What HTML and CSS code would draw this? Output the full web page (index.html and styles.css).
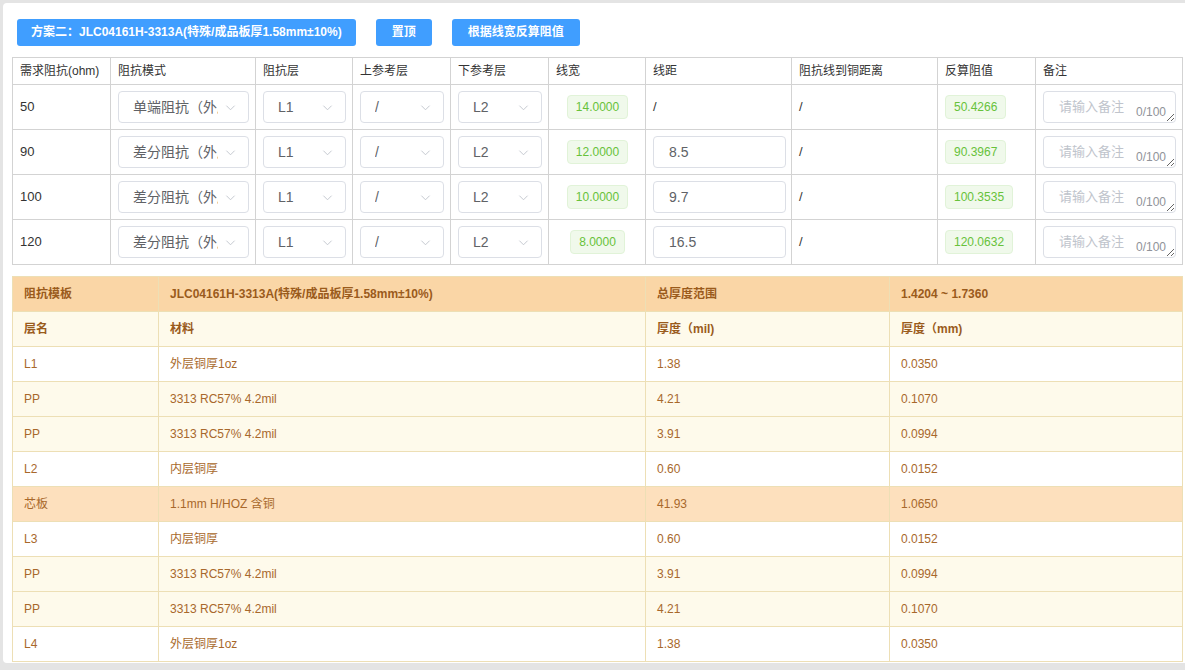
FILE: index.html
```html
<!DOCTYPE html>
<html lang="zh-CN">
<head>
<meta charset="utf-8">
<title>阻抗计算</title>
<link rel="stylesheet" href="styles.css">
</head>
<body>
<div class="card">
  <div class="toolbar">
    <button class="btn btn-wide">方案二：JLC04161H-3313A(特殊/成品板厚1.58mm±10%)</button>
    <button class="btn">置顶</button>
    <button class="btn">根据线宽反算阻值</button>
  </div>

  <table class="imp">
    <colgroup>
      <col class="c98"><col class="c145"><col class="c97"><col class="c98"><col class="c98"><col class="c97"><col class="c146"><col class="c146"><col class="c98"><col class="c147">
    </colgroup>
    <thead>
      <tr>
        <th>需求阻抗(ohm)</th><th>阻抗模式</th><th>阻抗层</th><th>上参考层</th><th>下参考层</th><th>线宽</th><th>线距</th><th>阻抗线到铜距离</th><th>反算阻值</th><th>备注</th>
      </tr>
    </thead>
    <tbody>
      <tr>
        <td>50</td>
        <td><div class="sel"><span class="sel-text">单端阻抗（外层）</span><svg class="arrow" viewBox="0 0 12 12"><path d="M1.5 4 L6 8.5 L10.5 4"/></svg></div></td>
        <td><div class="sel"><span class="sel-text">L1</span><svg class="arrow" viewBox="0 0 12 12"><path d="M1.5 4 L6 8.5 L10.5 4"/></svg></div></td>
        <td><div class="sel"><span class="sel-text">/</span><svg class="arrow" viewBox="0 0 12 12"><path d="M1.5 4 L6 8.5 L10.5 4"/></svg></div></td>
        <td><div class="sel"><span class="sel-text">L2</span><svg class="arrow" viewBox="0 0 12 12"><path d="M1.5 4 L6 8.5 L10.5 4"/></svg></div></td>
        <td class="center"><span class="tag">14.0000</span></td>
        <td>/</td>
        <td>/</td>
        <td><span class="tag">50.4266</span></td>
        <td><div class="ta"><textarea placeholder="请输入备注" rows="1"></textarea><span class="count">0/100</span></div></td>
      </tr>
      <tr>
        <td>90</td>
        <td><div class="sel"><span class="sel-text">差分阻抗（外层）</span><svg class="arrow" viewBox="0 0 12 12"><path d="M1.5 4 L6 8.5 L10.5 4"/></svg></div></td>
        <td><div class="sel"><span class="sel-text">L1</span><svg class="arrow" viewBox="0 0 12 12"><path d="M1.5 4 L6 8.5 L10.5 4"/></svg></div></td>
        <td><div class="sel"><span class="sel-text">/</span><svg class="arrow" viewBox="0 0 12 12"><path d="M1.5 4 L6 8.5 L10.5 4"/></svg></div></td>
        <td><div class="sel"><span class="sel-text">L2</span><svg class="arrow" viewBox="0 0 12 12"><path d="M1.5 4 L6 8.5 L10.5 4"/></svg></div></td>
        <td class="center"><span class="tag">12.0000</span></td>
        <td><div class="inp">8.5</div></td>
        <td>/</td>
        <td><span class="tag">90.3967</span></td>
        <td><div class="ta"><textarea placeholder="请输入备注" rows="1"></textarea><span class="count">0/100</span></div></td>
      </tr>
      <tr>
        <td>100</td>
        <td><div class="sel"><span class="sel-text">差分阻抗（外层）</span><svg class="arrow" viewBox="0 0 12 12"><path d="M1.5 4 L6 8.5 L10.5 4"/></svg></div></td>
        <td><div class="sel"><span class="sel-text">L1</span><svg class="arrow" viewBox="0 0 12 12"><path d="M1.5 4 L6 8.5 L10.5 4"/></svg></div></td>
        <td><div class="sel"><span class="sel-text">/</span><svg class="arrow" viewBox="0 0 12 12"><path d="M1.5 4 L6 8.5 L10.5 4"/></svg></div></td>
        <td><div class="sel"><span class="sel-text">L2</span><svg class="arrow" viewBox="0 0 12 12"><path d="M1.5 4 L6 8.5 L10.5 4"/></svg></div></td>
        <td class="center"><span class="tag">10.0000</span></td>
        <td><div class="inp">9.7</div></td>
        <td>/</td>
        <td><span class="tag">100.3535</span></td>
        <td><div class="ta"><textarea placeholder="请输入备注" rows="1"></textarea><span class="count">0/100</span></div></td>
      </tr>
      <tr>
        <td>120</td>
        <td><div class="sel"><span class="sel-text">差分阻抗（外层）</span><svg class="arrow" viewBox="0 0 12 12"><path d="M1.5 4 L6 8.5 L10.5 4"/></svg></div></td>
        <td><div class="sel"><span class="sel-text">L1</span><svg class="arrow" viewBox="0 0 12 12"><path d="M1.5 4 L6 8.5 L10.5 4"/></svg></div></td>
        <td><div class="sel"><span class="sel-text">/</span><svg class="arrow" viewBox="0 0 12 12"><path d="M1.5 4 L6 8.5 L10.5 4"/></svg></div></td>
        <td><div class="sel"><span class="sel-text">L2</span><svg class="arrow" viewBox="0 0 12 12"><path d="M1.5 4 L6 8.5 L10.5 4"/></svg></div></td>
        <td class="center"><span class="tag">8.0000</span></td>
        <td><div class="inp">16.5</div></td>
        <td>/</td>
        <td><span class="tag">120.0632</span></td>
        <td><div class="ta"><textarea placeholder="请输入备注" rows="1"></textarea><span class="count">0/100</span></div></td>
      </tr>
    </tbody>
  </table>

  <table class="stack">
    <colgroup>
      <col class="c146"><col class="c487"><col class="c244"><col class="c293">
    </colgroup>
    <tr class="r-head"><td>阻抗模板</td><td>JLC04161H-3313A(特殊/成品板厚1.58mm±10%)</td><td>总厚度范围</td><td>1.4204 ~ 1.7360</td></tr>
    <tr class="r-sub"><td>层名</td><td>材料</td><td>厚度（mil)</td><td>厚度（mm)</td></tr>
    <tr class="r-cu"><td>L1</td><td>外层铜厚1oz</td><td>1.38</td><td>0.0350</td></tr>
    <tr class="r-pp"><td>PP</td><td>3313 RC57% 4.2mil</td><td>4.21</td><td>0.1070</td></tr>
    <tr class="r-pp"><td>PP</td><td>3313 RC57% 4.2mil</td><td>3.91</td><td>0.0994</td></tr>
    <tr class="r-cu"><td>L2</td><td>内层铜厚</td><td>0.60</td><td>0.0152</td></tr>
    <tr class="r-core"><td>芯板</td><td>1.1mm H/HOZ 含铜</td><td>41.93</td><td>1.0650</td></tr>
    <tr class="r-cu"><td>L3</td><td>内层铜厚</td><td>0.60</td><td>0.0152</td></tr>
    <tr class="r-pp"><td>PP</td><td>3313 RC57% 4.2mil</td><td>3.91</td><td>0.0994</td></tr>
    <tr class="r-pp"><td>PP</td><td>3313 RC57% 4.2mil</td><td>4.21</td><td>0.1070</td></tr>
    <tr class="r-cu"><td>L4</td><td>外层铜厚1oz</td><td>1.38</td><td>0.0350</td></tr>
  </table>
</div>
</body>
</html>
```

FILE: styles.css
```css
* { box-sizing: border-box; }

html, body {
  margin: 0;
  padding: 0;
  background: #e4e4e4;
  font-family: "Liberation Sans", Arial, "Noto Sans CJK SC", sans-serif;
  overflow: hidden;
}

.card {
  margin: 3px 0 0 3px;
  background: #ffffff;
  border-radius: 4px 0 0 4px;
  padding: 16px 3px 2px 9px;
  width: 1182px;
  height: 660px;
}

.toolbar {
  display: flex;
  gap: 20px;
  padding-left: 5px;
  margin-bottom: 11px;
}

.btn {
  height: 27px;
  padding: 0 16px;
  background: #409eff;
  color: #ffffff;
  border: none;
  border-radius: 3px;
  font-family: inherit;
  font-size: 12px;
  font-weight: bold;
  line-height: 27px;
  white-space: nowrap;
  flex: none;
}
.btn-wide { padding: 0 14px; }

table {
  border-collapse: collapse;
  table-layout: fixed;
  width: 1170px;
}

.c98 { width: 98px; }
.c145 { width: 145px; }
.c97 { width: 97px; }
.c146 { width: 146px; }
.c147 { width: 147px; }
.c487 { width: 487px; }
.c244 { width: 244px; }
.c293 { width: 293px; }

.imp th,
.imp td {
  border: 1px solid #d3d3d3;
  padding: 0 6px 0 7px;
  text-align: left;
  color: #333333;
  white-space: nowrap;
}
.imp th {
  height: 27px;
  font-size: 12px;
  font-weight: normal;
  line-height: 16px;
}
.imp td {
  height: 45px;
  font-size: 13px;
  line-height: 16px;
}
.imp td.center { text-align: center; }

.sel {
  position: relative;
  height: 32px;
  border: 1px solid #dcdfe6;
  border-radius: 4px;
  background: #fff;
  display: flex;
  align-items: center;
  padding: 0 30px 0 14px;
}
.sel-text {
  overflow: hidden;
  white-space: nowrap;
  font-size: 14px;
  color: #606266;
  display: block;
  width: 100%;
}
.arrow {
  position: absolute;
  right: 12px;
  top: 10px;
  width: 11px;
  height: 11px;
  fill: none;
  stroke: #c0c4cc;
  stroke-width: 1;
}

.tag {
  display: inline-block;
  height: 24px;
  line-height: 22px;
  padding: 0 8px;
  font-size: 12px;
  color: #67c23a;
  background: #f0f9eb;
  border: 1px solid #e1f3d8;
  border-radius: 4px;
}

.inp {
  height: 32px;
  border: 1px solid #dcdfe6;
  border-radius: 4px;
  padding: 0 15px;
  line-height: 30px;
  font-size: 14px;
  color: #606266;
  width: 133px;
}

.ta {
  position: relative;
  width: 133px;
  height: 32px;
}
.ta textarea {
  display: block;
  width: 133px;
  height: 32px;
  border: 1px solid #dcdfe6;
  border-radius: 4px;
  padding: 5px 15px;
  font-family: inherit;
  font-size: 13px;
  line-height: 20px;
  color: #606266;
  resize: vertical;
  background: #fff;
}
.ta textarea::placeholder { color: #c0c4cc; }
.count {
  position: absolute;
  right: 10px;
  bottom: 4px;
  font-size: 12px;
  line-height: 14px;
  color: #909399;
  background: #fff;
}

.stack {
  margin-top: 11px;
}
.stack td {
  height: 35px;
  border: 1px solid #eddfb5;
  padding: 0 11px;
  font-size: 12px;
  line-height: 16px;
  color: #a8682b;
  white-space: nowrap;
}
.r-head td {
  background: #fad6a6;
  font-weight: bold;
  color: #9a5b1c;
}
.r-sub td {
  background: #fefaeb;
  font-weight: bold;
  color: #9a5b1c;
}
.r-cu td { background: #ffffff; }
.r-pp td { background: #fefaeb; }
.r-core td { background: #fde0bd; }
```
